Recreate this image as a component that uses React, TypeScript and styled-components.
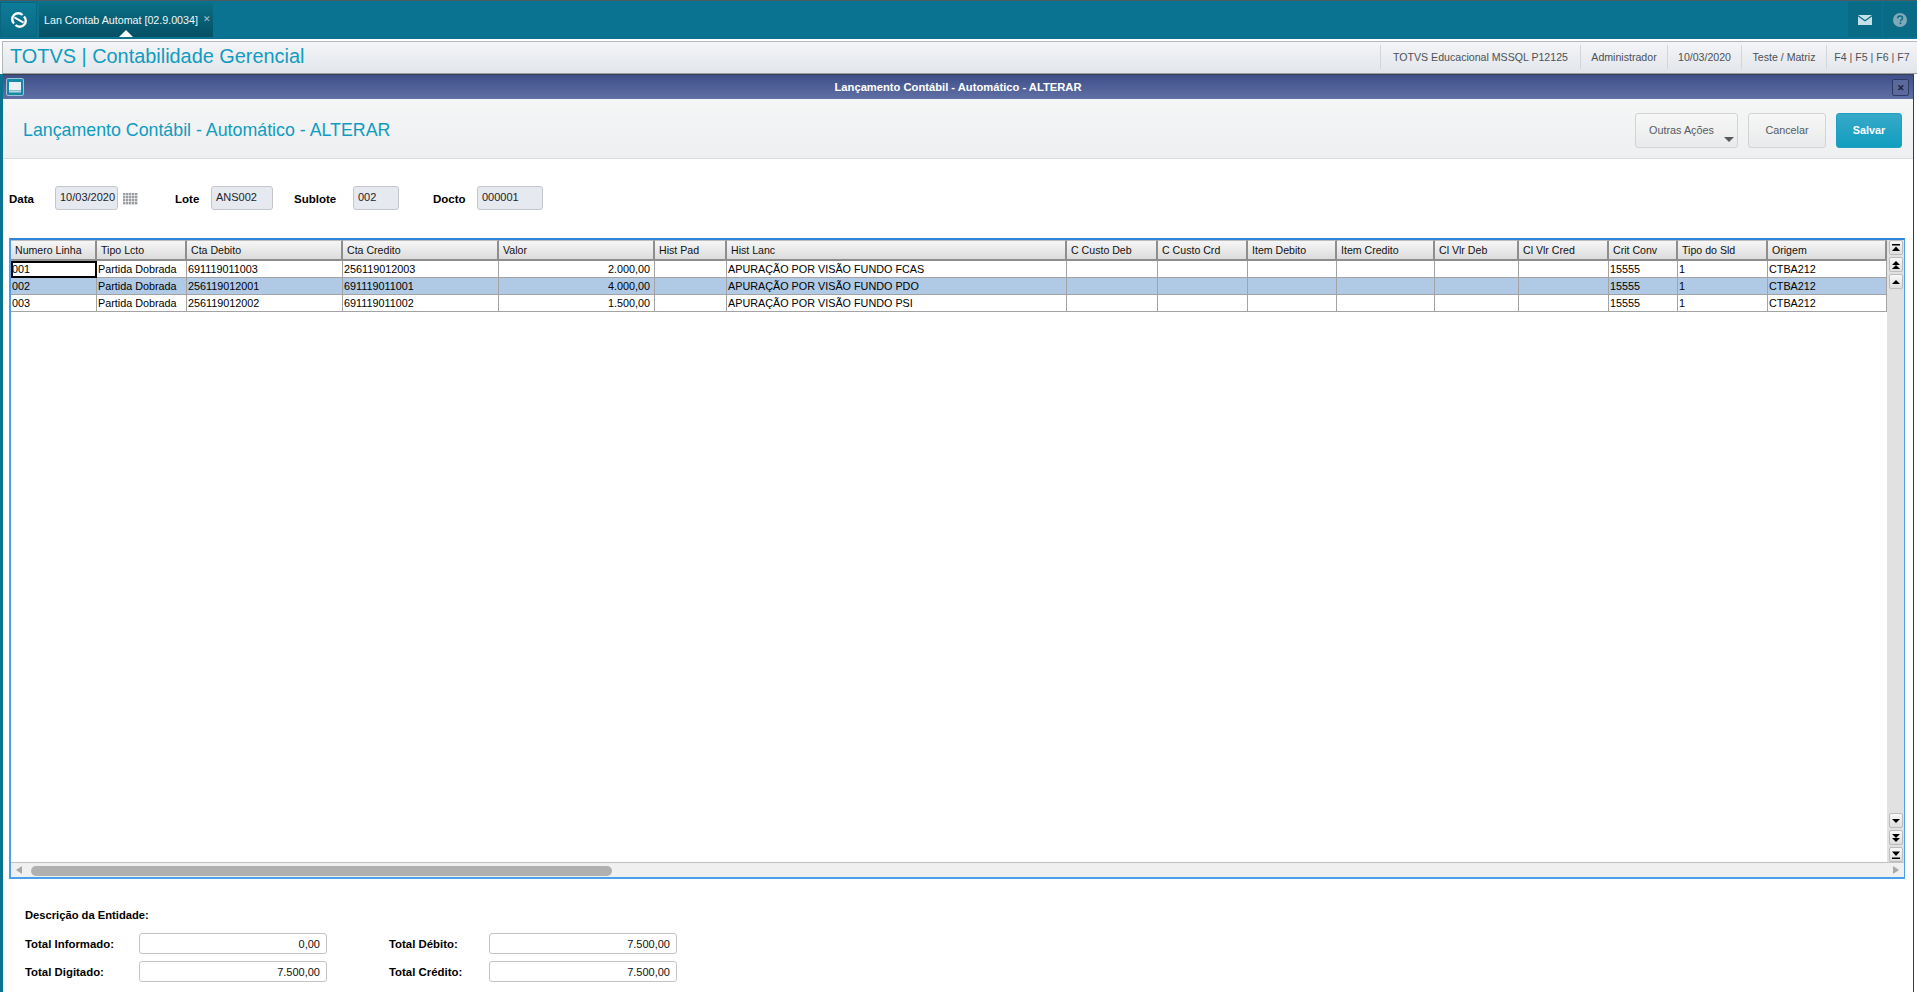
import React from "react";
import styled, { createGlobalStyle } from "styled-components";

const Global = createGlobalStyle`
  html, body { margin: 0; padding: 0; background: #fff; overflow: hidden; }
  body { font-family: "Liberation Sans", Arial, sans-serif; font-size: 11px; color: #000; }
  * { box-sizing: border-box; }
`;

const Page = styled.div`
  width: 1917px; height: 992px; display: flex; flex-direction: column; overflow: hidden; background: #fff;
`;
const TopBar = styled.header`
  height: 39px; flex: none; display: flex; padding-top: 1px; background: #0a7391; border-top: 1px solid #4a5a60;
`;
const LogoCell = styled.div`
  width: 37px; height: 35px; display: flex; align-items: center; justify-content: center;
  background: linear-gradient(#0c7c98, #0a6a85); border: 1px solid #0a657e;
`;
const Tab = styled.div`
  position: relative; width: 174px; height: 35px; margin-left: 2px; display: flex; align-items: center;
  padding: 0 0 0 5px; color: #f2f8fa; font-size: 10.7px; white-space: nowrap;
  background: linear-gradient(#0a7087, #054f63);
`;
const TabClose = styled.span`
  margin-left: 5px; color: #a8c4cd; font-size: 9px; position: relative; top: -1px;
`;
const TabPointer = styled.span`
  position: absolute; left: 80px; bottom: 0; width: 0; height: 0;
  border-left: 7px solid transparent; border-right: 7px solid transparent; border-bottom: 7px solid #fff;
`;
const TopSpacer = styled.div` flex: 1; `;
const TopIconCell = styled.div`
  width: 34px; height: 35px; margin-left: 1px; display: flex; align-items: center; justify-content: center;
  background: #0a6b87;
`;
const InfoBar = styled.div`
  height: 33px; margin: 2px 0 0 2px; padding-bottom: 2px; flex: none; display: flex; align-items: center; justify-content: space-between;
  background: linear-gradient(#f3f5f7, #e2e5ea); border-top: 1px solid #b4b8bd; border-bottom: 1px solid #9a9ea3; border-left: 1px solid #b4b8bd;
`;
const AppTitle = styled.div`
  color: #0f9cc0; font-size: 19.9px; padding-left: 7px; white-space: nowrap;
`;
const InfoItems = styled.div` display: flex; height: 24px; `;
const InfoItem = styled.div<{ $w: number }>`
  width: ${(p) => p.$w}px; border-left: 1px solid #d2d5d9; display: flex; align-items: center; justify-content: center;
  color: #4c5158; font-size: 10.6px; white-space: nowrap;
`;
const Desk = styled.div`
  flex: 1; min-height: 0; display: flex; background: #fff; border-left: 3px solid #0a7391; padding-right: 3px;
`;
const Window = styled.div`
  flex: 1; min-width: 0; display: flex; flex-direction: column; border-top: 1px solid #3a3f4c; border-right: 1px solid #27405f;
`;
const TitleBar = styled.div`
  position: relative; height: 24px; flex: none; display: flex; align-items: center; justify-content: center;
  background: linear-gradient(#3e4f89, #6070a5); color: #fff; font-weight: bold; font-size: 11.2px;
`;
const WinIcon = styled.span`
  position: absolute; left: 3px; top: 3px; width: 18px; height: 18px; display: flex; align-items: center; justify-content: center;
  background: #1788a8; border: 1px solid #9dc3d3; border-radius: 2px;
`;
const WinClose = styled.span`
  position: absolute; right: 4px; top: 4px; width: 17px; height: 17px; display: flex; align-items: center; justify-content: center;
  background: #5a6a9e; border: 1px solid #2f3a63; border-radius: 2px; color: #1a1f33; font-size: 9px; font-weight: bold;
`;
const ActionHeader = styled.div`
  height: 60px; flex: none; display: flex; align-items: center; justify-content: space-between;
  padding: 0 11px 0 20px; background: linear-gradient(#f5f6f6, #edeff1); border-bottom: 1px solid #d9dbdd;
`;
const ViewTitle = styled.h1`
  margin: 4px 0 0; color: #0f9cc0; font-size: 17.8px; font-weight: normal; white-space: nowrap;
`;
const Buttons = styled.div` display: flex; gap: 10px; margin-top: 3px; `;
const Btn = styled.button<{ $w: number; $primary?: boolean; $menu?: boolean }>`
  position: relative; width: ${(p) => p.$w}px; height: 35px; padding: 0 ${(p) => (p.$menu ? "10px" : "0")} 0 0; border-radius: 3px;
  font: 10.8px "Liberation Sans", Arial, sans-serif;
  color: ${(p) => (p.$primary ? "#fff" : "#555a60")}; font-weight: ${(p) => (p.$primary ? "bold" : "normal")};
  background: ${(p) => (p.$primary ? "linear-gradient(#37a9c8, #119ec0)" : "linear-gradient(#f7f7f7, #e9eaeb)")};
  border: 1px solid ${(p) => (p.$primary ? "#1fa0c0" : "#d2d3d5")};
`;
const Caret = styled.span`
  position: absolute; right: 3px; bottom: 5px; width: 0; height: 0;
  border-left: 5px solid transparent; border-right: 5px solid transparent; border-top: 5px solid #555a60;
`;
const Content = styled.div`
  flex: 1; min-height: 0; display: flex; flex-direction: column; padding: 27px 8px 0 6px;
`;
const Fields = styled.div` display: flex; align-items: center; height: 24px; `;
const FieldLabel = styled.label<{ $w: number; $pad?: number }>`
  width: ${(p) => p.$w}px; margin-left: ${(p) => p.$pad ?? 0}px; font-weight: bold; font-size: 11.5px; padding-top: 1px; white-space: nowrap;
`;
const ReadOnly = styled.div<{ $w: number }>`
  width: ${(p) => p.$w}px; height: 24px; background: #e6e9ef; border: 1px solid #c3c6cb; border-radius: 3px;
  padding: 0 0 3px 4px; display: flex; align-items: center; color: #20242a; font-size: 11px;
`;
const CalIcon = styled.span` margin-left: 5px; display: flex; `;
const GridFrame = styled.div`
  margin-top: 28px; height: 641px; flex: none; display: flex; flex-direction: column;
  border-top: 2px solid #2f83d8; border-left: 2px solid #4a9fee; border-right: 1px solid #4a9fee;
`;
const GridMain = styled.div` flex: 1; min-height: 0; display: flex; `;
const TableArea = styled.div` flex: 1; min-width: 0; background: #fff; `;
const Table = styled.table`
  table-layout: fixed; width: 1876px; border-collapse: separate; border-spacing: 0; font-size: 10.8px;
`;
const Th = styled.th`
  height: 21px; padding: 0 0 1px 4px; text-align: left; font-weight: normal; font-size: 10.6px; color: #111; white-space: nowrap; overflow: hidden;
  background: linear-gradient(#f6f6f6, #dcdcdc); border-right: 2px solid #8e8e8e; border-bottom: 2px solid #8e8e8e; border-top: 1px solid #bdbdbd;
`;
const Td = styled.td<{ $sel?: boolean; $right?: boolean; $active?: boolean }>`
  height: 17px; padding: 0 ${(p) => (p.$right ? "4px" : "0")} 1px 1px; text-align: ${(p) => (p.$right ? "right" : "left")};
  white-space: nowrap; overflow: hidden; line-height: 14px;
  background: ${(p) => (p.$sel ? "#b0cae6" : "#fff")};
  border-right: 1px solid #a3a3a3; border-bottom: 1px solid #a3a3a3;
  ${(p) => p.$active && "outline: 2px solid #000; outline-offset: -2px;"}
`;
const VScroll = styled.div`
  width: 17px; flex: none; display: flex; flex-direction: column; justify-content: space-between;
  background: #e1e1e1; padding: 0 1px 0 2px;
`;
const ArrowGroup = styled.div` display: flex; flex-direction: column; gap: 2px; `;
const ArrowBtn = styled.div`
  height: 15px; display: flex; align-items: center; justify-content: center;
  background: linear-gradient(#f8f8f8, #dedede); border: 1px solid #bcbcbc; border-radius: 2px;
`;
const HScroll = styled.div`
  height: 17px; flex: none; position: relative; background: #f0f0f0;
  border-top: 1px solid #c2c2c2; border-bottom: 2px solid #4a9fee;
`;
const HThumb = styled.div`
  position: absolute; left: 20px; top: 3px; width: 581px; height: 10px; border-radius: 5px; background: #b0b0b0;
`;
const HArrow = styled.span<{ $right?: boolean }>`
  position: absolute; top: 3px; ${(p) => (p.$right ? "right: 5px;" : "left: 5px;")} width: 0; height: 0;
  border-top: 4.5px solid transparent; border-bottom: 4.5px solid transparent;
  ${(p) => (p.$right ? "border-left: 6px solid #a8a8a8;" : "border-right: 6px solid #a8a8a8;")}
`;
const Totals = styled.div`
  padding: 30px 0 0 16px; display: grid; grid-template-columns: 114px 188px 62px 100px 188px;
  grid-template-rows: 17px 21px 21px; row-gap: 7px; align-items: center;
`;
const Entity = styled.div` grid-column: 1 / -1; align-self: start; font-weight: bold; font-size: 11.2px; `;
const TotalLabel = styled.div<{ $col?: number }>`
  ${(p) => p.$col && `grid-column: ${p.$col};`} font-weight: bold; font-size: 11.4px; white-space: nowrap;
`;
const TotalBox = styled.div`
  height: 21px; border: 1px solid #c4c4c4; border-radius: 3px; background: #fff; display: flex; align-items: center; justify-content: flex-end;
  padding-right: 6px; font-size: 11px; color: #111;
`;

const Logo = () => (
  <svg width="16" height="16" viewBox="0 0 16 16">
    <path d="M3 11.5A6 6 0 0 1 11.5 3" fill="none" stroke="#fff" strokeWidth="2.4" />
    <path d="M13 4.5A6 6 0 0 1 4.5 13" fill="none" stroke="#fff" strokeWidth="2.4" />
    <path d="M3.4 5.4L12.6 10.6" stroke="#fff" strokeWidth="1.8" fill="none" />
  </svg>
);
const Mail = () => (
  <svg width="14" height="10" viewBox="0 0 14 10">
    <path d="M0 0h14L7 5z" fill="#c6e0e7" />
    <path d="M0 1.5L7 6.5 14 1.5V10H0z" fill="#c6e0e7" />
  </svg>
);
const Help = () => (
  <svg width="14" height="14" viewBox="0 0 14 14">
    <circle cx="7" cy="7" r="7" fill="#7fa9b8" />
    <path d="M4.6 5.2C4.7 3.8 5.7 3 7.1 3c1.4 0 2.4.8 2.4 2 0 1-.6 1.5-1.3 2-.5.4-.7.6-.7 1.2" fill="none" stroke="#0a6b87" strokeWidth="1.5" />
    <rect x="6.6" y="9.4" width="1.7" height="1.7" fill="#0a6b87" />
  </svg>
);
const Monitor = () => (
  <svg width="12" height="11" viewBox="0 0 12 11">
    <rect x="0.5" y="0.5" width="11" height="7.5" fill="#e9f1f4" stroke="#e9f1f4" />
    <rect x="0" y="9" width="12" height="1.5" fill="#b9d5df" />
  </svg>
);
const Calendar = () => (
  <svg width="15" height="13" viewBox="0 0 15 13">
    {[0, 1, 2, 3].map((r) =>
      [0, 1, 2, 3, 4].map((c) => <rect key={`${r}-${c}`} x={c * 3} y={r * 3 + 1} width="2.4" height="2.4" fill="#9a9ea3" />)
    )}
  </svg>
);
type Kind = "first" | "page" | "line" | "lineD" | "pageD" | "last";
const Arrow = ({ kind }: { kind: Kind }) => {
  const d: Record<Kind, React.ReactNode> = {
    first: <><rect x="1" y="0" width="8" height="1.5" /><path d="M5 2.5L9 7H1z" /></>,
    page: <><path d="M5 0L9 4H1z" /><path d="M5 4L9 8H1z" /></>,
    line: <path d="M5 2L9 6H1z" />,
    lineD: <path d="M5 6L9 2H1z" />,
    pageD: <><path d="M5 4L9 0H1z" /><path d="M5 8L9 4H1z" /></>,
    last: <><path d="M5 5L9 0.5H1z" /><rect x="1" y="6.5" width="8" height="1.5" /></>,
  };
  return (
    <ArrowBtn>
      <svg width="10" height="8" viewBox="0 0 10 8" fill="#000">{d[kind]}</svg>
    </ArrowBtn>
  );
};

const edges = [11, 97, 187, 343, 499, 655, 727, 1067, 1158, 1248, 1337, 1435, 1519, 1609, 1678, 1768, 1887];
const columns = ["Numero Linha", "Tipo Lcto", "Cta Debito", "Cta Credito", "Valor", "Hist Pad", "Hist Lanc", "C Custo Deb", "C Custo Crd", "Item Debito", "Item Credito", "Cl Vlr Deb", "Cl Vlr Cred", "Crit Conv", "Tipo do Sld", "Origem"];
const rows = [
  ["001", "Partida Dobrada", "691119011003", "256119012003", "2.000,00", "", "APURAÇÃO POR VISÃO FUNDO FCAS", "", "", "", "", "", "", "15555", "1", "CTBA212"],
  ["002", "Partida Dobrada", "256119012001", "691119011001", "4.000,00", "", "APURAÇÃO POR VISÃO FUNDO PDO", "", "", "", "", "", "", "15555", "1", "CTBA212"],
  ["003", "Partida Dobrada", "256119012002", "691119011002", "1.500,00", "", "APURAÇÃO POR VISÃO FUNDO PSI", "", "", "", "", "", "", "15555", "1", "CTBA212"],
];

export default function App() {
  return (
    <Page>
      <Global />
      <TopBar>
        <LogoCell><Logo /></LogoCell>
        <Tab>
          Lan Contab Automat [02.9.0034]
          <TabClose>✕</TabClose>
          <TabPointer />
        </Tab>
        <TopSpacer />
        <TopIconCell><Mail /></TopIconCell>
        <TopIconCell><Help /></TopIconCell>
      </TopBar>
      <InfoBar>
        <AppTitle>TOTVS | Contabilidade Gerencial</AppTitle>
        <InfoItems>
          <InfoItem $w={200}>TOTVS Educacional MSSQL P12125</InfoItem>
          <InfoItem $w={87}>Administrador</InfoItem>
          <InfoItem $w={74}>10/03/2020</InfoItem>
          <InfoItem $w={85}>Teste / Matriz</InfoItem>
          <InfoItem $w={91}>F4 | F5 | F6 | F7</InfoItem>
        </InfoItems>
      </InfoBar>
      <Desk>
        <Window>
          <TitleBar>
            <WinIcon><Monitor /></WinIcon>
            Lançamento Contábil - Automático - ALTERAR
            <WinClose>✕</WinClose>
          </TitleBar>
          <ActionHeader>
            <ViewTitle>Lançamento Contábil - Automático - ALTERAR</ViewTitle>
            <Buttons>
              <Btn $w={103} $menu>Outras Ações<Caret /></Btn>
              <Btn $w={78}>Cancelar</Btn>
              <Btn $w={66} $primary>Salvar</Btn>
            </Buttons>
          </ActionHeader>
          <Content>
            <Fields>
              <FieldLabel $w={46}>Data</FieldLabel>
              <ReadOnly $w={63}>10/03/2020</ReadOnly>
              <CalIcon><Calendar /></CalIcon>
              <FieldLabel $w={36} $pad={37}>Lote</FieldLabel>
              <ReadOnly $w={62}>ANS002</ReadOnly>
              <FieldLabel $w={59} $pad={21}>Sublote</FieldLabel>
              <ReadOnly $w={46}>002</ReadOnly>
              <FieldLabel $w={44} $pad={34}>Docto</FieldLabel>
              <ReadOnly $w={66}>000001</ReadOnly>
            </Fields>
            <GridFrame>
              <GridMain>
                <TableArea>
                  <Table>
                    <colgroup>
                      {columns.map((c, i) => (
                        <col key={c} style={{ width: edges[i + 1] - edges[i] }} />
                      ))}
                    </colgroup>
                    <thead>
                      <tr>{columns.map((c) => <Th key={c}>{c}</Th>)}</tr>
                    </thead>
                    <tbody>
                      {rows.map((r, ri) => (
                        <tr key={r[0]}>
                          {r.map((v, ci) => (
                            <Td key={ci} $sel={ri === 1} $right={ci === 4} $active={ri === 0 && ci === 0}>{v}</Td>
                          ))}
                        </tr>
                      ))}
                    </tbody>
                  </Table>
                </TableArea>
                <VScroll>
                  <ArrowGroup>
                    <Arrow kind="first" />
                    <Arrow kind="page" />
                    <Arrow kind="line" />
                  </ArrowGroup>
                  <ArrowGroup>
                    <Arrow kind="lineD" />
                    <Arrow kind="pageD" />
                    <Arrow kind="last" />
                  </ArrowGroup>
                </VScroll>
              </GridMain>
              <HScroll>
                <HArrow />
                <HThumb />
                <HArrow $right />
              </HScroll>
            </GridFrame>
            <Totals>
              <Entity>Descrição da Entidade:</Entity>
              <TotalLabel>Total Informado:</TotalLabel>
              <TotalBox>0,00</TotalBox>
              <TotalLabel $col={4}>Total Débito:</TotalLabel>
              <TotalBox>7.500,00</TotalBox>
              <TotalLabel>Total Digitado:</TotalLabel>
              <TotalBox>7.500,00</TotalBox>
              <TotalLabel $col={4}>Total Crédito:</TotalLabel>
              <TotalBox>7.500,00</TotalBox>
            </Totals>
          </Content>
        </Window>
      </Desk>
    </Page>
  );
}
